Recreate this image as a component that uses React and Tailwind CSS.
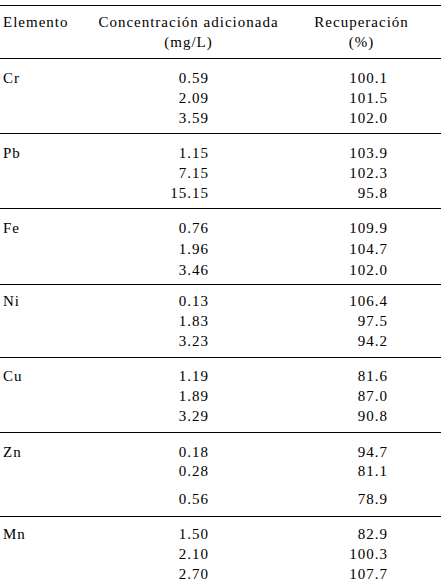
import React from "react";

// Tabla de recuperación por elemento
const grupos = [
    { el: "Cr", pad: "pt-[9px] pb-[5px]", filas: [["0.59", "100.1", "h-[20px]"], ["2.09", "101.5", "h-[20px]"], ["3.59", "102.0", "h-[20px]"]] },
    { el: "Pb", pad: "pt-[9px] pb-[5px]", filas: [["1.15", "103.9", "h-[20px]"], ["7.15", "102.3", "h-[20px]"], ["15.15", "95.8", "h-[20px]"]] },
    { el: "Fe", pad: "pt-[9px] pb-[3px]", filas: [["0.76", "109.9", "h-[21px]"], ["1.96", "104.7", "h-[21px]"], ["3.46", "102.0", "h-[21px]"]] },
    { el: "Ni", pad: "pt-[6px] pb-[6px]", filas: [["0.13", "106.4", "h-[20px]"], ["1.83", "97.5", "h-[20px]"], ["3.23", "94.2", "h-[20px]"]] },
    { el: "Cu", pad: "pt-[8px] pb-[6px]", filas: [["1.19", "81.6", "h-[20px]"], ["1.89", "87.0", "h-[20px]"], ["3.29", "90.8", "h-[20px]"]] },
    { el: "Zn", pad: "pt-[9px] pb-[7px]", filas: [["0.18", "94.7", "h-[19px]"], ["0.28", "81.1", "h-[28px]"], ["0.56", "78.9", "h-[20px]"]] },
    { el: "Mn", pad: "pt-[7px] pb-0", filas: [["1.50", "82.9", "h-[20px]"], ["2.10", "100.3", "h-[20px]"], ["2.70", "107.7", "h-[20px]"]] },
];

export default function App() {
    return (
        <div className="w-[444px] h-[585px] overflow-hidden bg-white text-black text-[15px] leading-[20px] tracking-[1px] font-[family-name:Liberation_Serif,serif]">
            <div className="w-[441px] mt-[5px] border-t border-black">

                <div className="flex flex-row pt-[6px] pb-[6px]">
                    <div className="w-[96px] pl-[3px]">Elemento</div>
                    <div className="w-[190px] flex flex-col items-center">
                        <p>Concentración adicionada</p>
                        <p>(mg/L)</p>
                    </div>
                    <div className="w-[161px] flex flex-col items-center">
                        <p>Recuperación</p>
                        <p>(%)</p>
                    </div>
                </div>

                {grupos.map((g) => (
                    <div key={g.el} className={"border-t border-black " + g.pad}>
                        {g.filas.map(([conc, rec, h], i) => (
                            <div key={i} className={"flex flex-row " + h}>
                                <div className="w-[100px] pl-[3px]">{i === 0 ? g.el : ""}</div>
                                <div className="w-[109px] text-right">{conc}</div>
                                <div className="w-[179px] text-right">{rec}</div>
                            </div>
                        ))}
                    </div>
                ))}

            </div>
        </div>
    );
}
